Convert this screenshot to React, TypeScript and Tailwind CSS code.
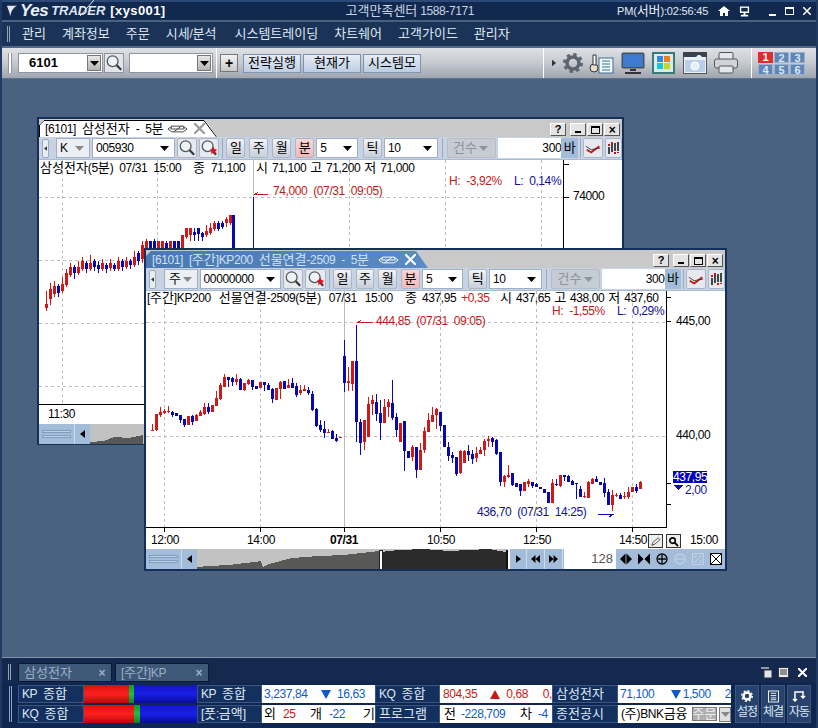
import React from "react";

const K = ({ children }: { children: string }) => (
  <>
    {children.split(/([\uAC00-\uD7A3]+)/).map((s, i) =>
      /[\uAC00-\uD7A3]/.test(s) ? (
        <span key={i} className="text-[13px] tracking-normal">{s}</span>
      ) : (
        <span key={i}>{s}</span>
      )
    )}
  </>
);

const RED = "#d01818";
const BLU = "#0808b0";
type C = [string, number, number, number?, number?];
const r = "r", b = "b";
const z11: C[] = [
  [r,270,272,253,272],[r,222,270,222,272],[r,216,226,202,230],[r,214,218,208,222],[r,212,216,198,220],[b,216,226,214,232],[b,220,228],[b,225,240,225,248],[b,237,255,237,260],[r,228,255],
  [b,228,246,226,254],[r,226,242,222,242],[r,216,228,210,228],[r,202,222,190,224],[b,202,216,190,222],[r,196,216],[r,174,198,154,198],[r,135,178,130,180],[r,110,140,102,140],[b,112,120,110,140],
  [b,114,126,112,138],[r,118,126,102,134],[b,116,150,114,150],[r,130,150,128,154],[r,120,132,116,136],[b,120,140,120,150],[b,138,146],[r,126,144],[b,126,134,126,152],[b,134,150,128,150],
  [b,148,178,144,190],[r,144,180],[r,126,148,124,176],[b,124,146,122,146],[r,135,144,116,144],[b,128,143,114,143],[b,138,164,130,170],[r,150,160,136,164],[r,148,154,136,154],[b,150,160,140,164],
  [b,162,210,154,212],[b,207,258,205,260],[b,256,270,240,276],[b,268,278,242,294],[r,276,278,266,278],[b,272,296,270,296],[b,294,302,282,306],[r,292,294],[b,48,128,0,156],[r,124,128,82,152],
  [r,63,132,63,152],[b,63,246,-45,306],[b,246,308,238,344],[r,240,306,240,330],[r,192,290,170,290],[r,180,192,165,224],[b,186,222,162,242],[b,220,248,180,300],[r,200,248,178,248],[r,186,200,178,230],
  [b,190,234,120,240],[b,232,270,218,290],
];
const z12: C[] = [
  [r,100,155,100,155],[b,92,182,92,242],[b,182,204],[r,172,202,165,214],[b,170,240,170,264],[r,180,240,160,240],[r,122,180,110,190],[r,90,125,68,125],[r,75,96,52,96],[r,58,75,55,118],
  [b,65,108,65,124],[b,105,172],[b,170,198,155,212],[b,194,204,185,218],[b,202,252,202,258],[r,184,248,180,252],[r,182,218,180,218],[b,182,194,165,214],[b,192,207,180,222],[r,188,204,172,216],
  [r,180,192,172,192],[r,152,180,148,198],[r,148,152,138,170],[b,144,155,140,170],[b,150,192,148,195],[b,187,275,187,288],[r,258,276,255,290],[r,254,262,226,264],[b,250,285,250,288],[b,280,290],
  [b,282,302,282,318],[r,275,302],[r,272,282,266,290],[b,277,287,277,295],[b,282,292,280,292],[b,290,298],[b,296,310],[b,305,338],[r,280,340,268,340],[b,282,284,268,288],
  [r,256,287,255,290],[b,256,260,255,272],[b,258,275,255,275],[b,272,284,270,284],[b,280,282,280,326],[b,296,322,288,322],[r,318,321,305,324],[r,275,323,273,323],[r,268,282,264,282],[b,266,276,258,276],
  [b,275,285],[b,280,308,264,322],[b,305,345,298,345],[r,316,345,300,362],[r,314,318,308,322],[b,316,326,308,326],[r,318,322,305,328],[r,305,320,292,326],[r,291,305],[b,292,303,282,308],[r,275,298,272,298],
];

const Candle = ({ x, c, t, bt, wt, wb }: { x: number; c: string; t: number; bt: number; wt: number; wb: number }) => {
  const f = c === "r" ? RED : BLU;
  const px = Math.round(x);
  return (
    <g fill={f} shapeRendering="crispEdges">
      <rect x={px} y={wt} width={1} height={Math.max(1, wb - wt)} />
      <rect x={px - 1} y={t} width={3} height={Math.max(1, bt - t)} />
    </g>
  );
};

const frontCandles = () => {
  const out: React.ReactNode[] = [];
  z11.forEach((d, i) => {
    const [c, t, bo, wt = t, wb = bo] = d;
    out.push(<Candle key={"a" + i} x={145 + (22 + 12 * i) / 3} c={c} t={340 + t / 3} bt={340 + bo / 3} wt={340 + wt / 3} wb={340 + wb / 3} />);
  });
  z12.forEach((d, i) => {
    const [c, t, bo, wt = t, wb = bo] = d;
    out.push(<Candle key={"b" + i} x={400 + (1 + 12 * i) / 3} c={c} t={390 + t / 3} bt={390 + bo / 3} wt={390 + wt / 3} wb={390 + wb / 3} />);
  });
  return out;
};

// x, colour, body top, body bottom, wick top, wick bottom in page pixels
const backData: [number, string, number, number, number, number][] = [
  [46,r,303,307,290,310],[50,r,288,298,282,304],[54,r,285,293,280,296],[58,b,285,292,283,296],[62,r,283,290,276,292],[66,r,272,284,268,286],[70,r,266,274,262,276],[74,b,266,272,264,278],[78,r,266,272,260,274],[82,r,260,268,256,270],
  [86,b,262,268,260,272],[90,r,262,268,254,270],[94,b,260,266,258,270],[98,b,264,268,260,272],[102,r,262,268,258,270],[106,b,264,268,262,272],[110,r,262,267,258,270],[114,b,264,268,262,270],[118,r,260,268,256,270],[122,b,260,266,258,270],
  [126,r,260,266,256,268],[130,b,260,264,258,268],[134,r,256,264,250,266],[138,b,252,260,250,264],[142,r,244,258,240,262],[146,r,240,250,238,252],[150,b,240,248,240,250],[154,b,240,248,238,250],[158,r,240,248,240,250],[162,r,240,248,240,250],
  [166,b,242,248,240,250],[170,r,240,248,240,250],[174,b,240,248,240,250],[178,b,240,248,240,250],[182,r,234,248,234,250],[186,r,227,236,227,238],[190,r,227,234,227,240],[194,b,231,234,227,240],[198,b,227,233,227,240],[202,b,232,236,231,240],
  [206,r,230,234,224,236],[210,r,227,232,222,234],[214,r,222,228,220,230],[218,b,222,228,220,230],[222,b,222,226,220,228],[226,r,218,222,216,226],[230,r,214,222,214,224],[233,b,214,248,214,248],
];

const Mag = ({ red }: { red?: boolean }) => (
  <svg viewBox="0 0 20 20" className="w-[18px] h-[18px]">
    <circle cx="8.500" cy="8" r="6" fill="#eef3fa" stroke="#555" strokeWidth="1.400" />
    <path d="M13 12.500l5 5" stroke="#333" strokeWidth="2.400" />
    {red && <path d="M11 12l3-1 1-3 1 3 3 1-2 2 1 3-3-2-3 2 1-3z" fill="#e01020" />}
  </svg>
);

const Drop = ({ c = "#000" }: { c?: string }) => (
  <svg viewBox="0 0 9 5" className="w-[9px] h-[5px] shrink-0"><path d="M0 0h9L4.500 5z" fill={c} /></svg>
);

const SqBtn = ({ t, on }: { t: string; on?: boolean }) => (
  <div className={`w-[19px] h-[20px] mr-[4px] border border-[#aab6c6] rounded-[2px] flex items-center justify-center ${on ? "bg-gradient-to-b from-[#fbd6d6] to-[#f2b8b8]" : "bg-gradient-to-b from-[#f2f4f7] to-[#c8cfd9]"}`}>
    <K>{t}</K>
  </div>
);

const Combo = ({ t, w, ml }: { t: string; w: string; ml: string }) => (
  <div className={`${w} ${ml} h-[20px] bg-white border border-[#9fb0c6] flex items-center justify-between pl-[3px] pr-[5px]`}>
    <span><K>{t}</K></span><Drop />
  </div>
);

const BarIcon = () => (
  <svg viewBox="0 0 20 20" className="w-[18px] h-[18px]">
    <path d="M3 12l5 3 9-7" fill="none" stroke="#d01010" strokeWidth="2" />
    <path d="M2 8l6 4 4-1 6-1" fill="none" stroke="#333" strokeWidth="1" />
  </svg>
);
const BarIcon2 = () => (
  <svg viewBox="0 0 20 20" className="w-[18px] h-[18px]" shapeRendering="crispEdges">
    <path d="M3 8h2v10H3zM7 5h2v11H7zM11 3h2v11h-2zM15 2h2v12h-2z" fill="#444" />
    <path d="M3 5h2v2H3zM7 2h2v2H7zM11 15h2v3h-2zM15 15h2v2h-2z" fill="#d01010" />
  </svg>
);

const WinBtn = ({ children }: { children: React.ReactNode }) => (
  <div className="w-[16px] h-[13px] bg-[#e4e4e4] border border-[#555] border-t-white border-l-white flex items-center justify-center text-[11px] font-bold text-black leading-none">{children}</div>
);

const Arrows = ({ c }: { c: string }) => (
  <svg viewBox="0 0 22 10" className="w-[21px] h-[10px]" fill="none" stroke={c} strokeWidth="1">
    <path d="M1 5l4-3h12l4 3-4 3H5zM5 2l-1 3h14l-1-3M7 8l8-6" />
  </svg>
);

const Title = ({ active, title, w }: { active?: boolean; title: string; w: string }) => (
  <div className="h-[18px] bg-[#c9c9c9] flex items-end justify-between shrink-0">
    <div className={`${w} h-[17px] relative flex items-center pl-[6px] [clip-path:polygon(0_5px,5px_0,calc(100%-12px)_0,100%_100%,0_100%)] ${active ? "bg-gradient-to-r from-[#4a78b0] to-[#5a8bc4] text-[#cfe1f5]" : "bg-white text-black"}`}>
      <span className="grow whitespace-pre"><K>{title}</K></span>
      <Arrows c={active ? "#ffffff" : "#444444"} />
      <svg viewBox="0 0 10 10" className="ml-[6px] mr-[12px] w-[11px] h-[11px]" stroke={active ? "#ffffff" : "#9a9a9a"} strokeWidth="2"><path d="M0 0l10 10M10 0L0 10" /></svg>
      {!active && (
        <svg viewBox="0 0 178 17" className="absolute inset-0 w-full h-full" fill="none" stroke="#000" preserveAspectRatio="none">
          <path d="M0.500 17V5L5 .5H165L177.500 17" />
        </svg>
      )}
    </div>
    <div className="flex gap-[1px] pr-[2px] pb-[1px]">
      <WinBtn>?</WinBtn><div className="w-[2px]" />
      <WinBtn><span className="w-[6px] h-[2px] bg-black mt-[5px]" /></WinBtn>
      <WinBtn><span className="w-[9px] h-[8px] border border-black border-t-2" /></WinBtn>
      <WinBtn><span className="text-[12px]">×</span></WinBtn>
    </div>
  </div>
);

const Tools = ({ kind, code, kindMl }: { kind: string; code: string; kindMl: string }) => (
  <div className="h-[23px] bg-[#c7d3e3] flex items-center pl-[3px] shrink-0 border-b border-[#a8bbd3] text-[12px]">
    <div className="w-[7px] h-[19px] bg-[#e8edf3] border border-[#9aa9bc] rounded-[2px] flex items-center justify-center shrink-0">
      <svg viewBox="0 0 4 6" className="w-[3px] h-[5px]"><path d="M4 0v6L0 3z" fill="#333" /></svg>
    </div>
    <div className={`${kindMl} w-[34px] h-[20px] bg-[#ecf0f5] border border-[#9fb0c6] flex items-center justify-between pl-[3px] pr-[5px]`}>
      <K>{kind}</K><Drop c="#888" />
    </div>
    <Combo t={code} w="w-[83px]" ml="ml-[2px]" />
    <div className="ml-[2px] w-[20px] h-[20px] bg-[#e6eaf0] border border-[#aab6c6] rounded-[2px] flex items-center justify-center"><Mag /></div>
    <div className="ml-[2px] w-[21px] h-[20px] bg-[#e6eaf0] border border-[#aab6c6] rounded-[2px] flex items-center justify-center"><Mag red /></div>
    <div className="ml-[3px] mr-[3px] w-[1px] h-[20px] bg-[#9aa9bc]" />
    <SqBtn t="일" /><SqBtn t="주" /><SqBtn t="월" /><SqBtn t="분" on />
    <Combo t="5" w="w-[42px]" ml="-ml-[2px]" />
    <div className="ml-[5px] w-[19px] h-[20px] bg-gradient-to-b from-[#f2f4f7] to-[#c8cfd9] border border-[#aab6c6] rounded-[2px] flex items-center justify-center"><K>틱</K></div>
    <Combo t="10" w="w-[54px]" ml="ml-[2px]" />
    <div className="ml-[4px] w-[1px] h-[20px] bg-[#9aa9bc]" />
    <div className="ml-[4px] w-[49px] h-[20px] bg-[#c6ccd4] border border-[#b4bcc7] rounded-[2px] flex items-center justify-between pl-[4px] pr-[6px] text-[#8d949e]">
      <K>건수</K><Drop c="#8d949e" />
    </div>
    <div className="ml-[2px] w-[64px] h-[20px] bg-white flex items-center justify-end">300</div>
    <div className="w-[17px] h-[20px] bg-[#a3bcd9] flex items-center justify-center"><K>바</K></div>
    <div className="ml-[2px] mr-[2px] w-[1px] h-[20px] bg-[#9aa9bc]" />
    <div className="w-[20px] h-[20px] bg-[#e6eaf0] border border-[#aab6c6] rounded-[2px] flex items-center justify-center"><BarIcon /></div>
    <div className="ml-[2px] w-[17px] h-[20px] bg-[#e6eaf0] border border-[#aab6c6] rounded-[2px] flex items-center justify-center overflow-hidden"><BarIcon2 /></div>
  </div>
);

const ScrollGrip = () => (
  <div className="w-[35px] h-full bg-[#a3bcd9] flex flex-col justify-center gap-[2px] px-[3px] shrink-0">
    <div className="h-[3px] bg-[#bcd0e6] border border-[#7f9cbd]" />
    <div className="h-[3px] bg-[#bcd0e6] border border-[#7f9cbd]" />
  </div>
);
const ScrollLeft = () => (
  <div className="w-[16px] h-full bg-[#a3bcd9] border-l border-[#cddcec] flex items-center justify-center shrink-0">
    <svg viewBox="0 0 5 8" className="w-[5px] h-[8px]"><path d="M5 0v8L0 4z" fill="#000" /></svg>
  </div>
);

const Front = () => (
  <div className="absolute left-[142px] top-[169px] w-[583px] h-[323px] border-2 border-[#12305a] bg-white flex flex-col text-[12px] text-black">
    <Title active title="[6101] [주간]KP200 선물연결-2509 - 5분" w="w-[282px]" />
    <Tools kind="주" code="00000000" kindMl="ml-[8px]" />
    <div className="relative h-[237px] shrink-0">
      <svg viewBox="146 291 579 237" className="absolute inset-0 w-[579px] h-[237px]" shapeRendering="crispEdges">
        {[164, 260, 440, 536, 632].map((x) => <line key={x} x1={x + 0.5} x2={x + 0.5} y1={291} y2={527} stroke="#bdbdbd" strokeDasharray="3 3" />)}
        <line x1={344.5} x2={344.5} y1={291} y2={527} stroke="#bcbcbc" />
        {[322, 436].map((y) => <line key={y} x1={146} x2={666} y1={y + 0.5} y2={y + 0.5} stroke="#bdbdbd" strokeDasharray="3 3" />)}
        {frontCandles()}
        <path d="M357 322.500h16" stroke="#c02020" fill="none" />
        <path d="M357 322.500l4-2" stroke="#c02020" fill="none" />
        <path d="M598 514.500h16M609 517l4-2.500" stroke={BLU} fill="none" />
        <line x1={666.5} x2={666.5} y1={291} y2={528} stroke="#000" />
        <line x1={146} x2={667} y1={527.5} y2={527.5} stroke="#000" />
        {[297, 321, 483, 504].map((y) => <line key={y} x1={667} x2={671} y1={y + 0.5} y2={y + 0.5} stroke="#000" />)}
        <path d="M673 485h10l-5 5z" fill="#1010b0" />
      </svg>
      <div className="absolute left-[1px] top-[0px] whitespace-pre [word-spacing:5px]"><K>[주간]KP200 선물연결-2509(5분) 07/31 15:00</K></div>
      <div className="absolute left-[259px] top-[0px] whitespace-pre [word-spacing:2px]"><K>종 437,95 </K><span className="text-[#c81818]">+0,35</span></div>
      <div className="absolute left-[354px] top-[0px] whitespace-pre [word-spacing:1px]"><K>시 437,65 고 438,00 저 437,60</K></div>
      <div className="absolute left-[406px] top-[13px] whitespace-pre text-[#c01818]"><K>H: -1,55%</K></div>
      <div className="absolute left-[471px] top-[13px] whitespace-pre text-[#1010a0]">L: 0,29%</div>
      <div className="absolute left-[230px] top-[23px] whitespace-pre text-[#c01818]">444,85 (07/31 09:05)</div>
      <div className="absolute left-[331px] top-[214px] whitespace-pre text-[#1010a0]">436,70 (07/31 14:25)</div>
      <div className="absolute left-[530px] top-[23px]">445,00</div>
      <div className="absolute left-[530px] top-[137px]">440,00</div>
      <div className="absolute left-[527px] top-[180px] w-[34px] h-[12px] bg-[#0000c0] text-white leading-[12px] text-center">437,95</div>
      <div className="absolute left-[539px] top-[192px] text-[#1010a0]">2,00</div>
    </div>
    <div className="relative h-[21px] shrink-0">
      <span className="absolute top-[5px] left-[5px]">12:00</span>
      <span className="absolute top-[5px] left-[101px]">14:00</span>
      <span className="absolute top-[5px] left-[184px] font-bold">07/31</span>
      <span className="absolute top-[5px] left-[281px]">10:50</span>
      <span className="absolute top-[5px] left-[377px]">12:50</span>
      <span className="absolute top-[5px] left-[473px]">14:50</span>
      <span className="absolute top-[5px] left-[544px]">15:00</span>
      <svg viewBox="146 528 579 21" className="absolute inset-0 w-[579px] h-[21px]" shapeRendering="crispEdges" fill="none" stroke="#000">
        {[164, 260, 344, 440, 536, 632].map((x) => <line key={x} x1={x + 0.5} x2={x + 0.5} y1={528} y2={532} />)}
      </svg>
      <div className="absolute left-[502px] top-[6px] w-[15px] h-[14px] border border-[#333] bg-[#eee] flex items-center justify-center">
        <svg viewBox="0 0 12 12" className="w-[11px] h-[11px]"><path d="M2 10l1-3 6-5 2 2-6 5zM2 10l3-1" fill="none" stroke="#555" /></svg>
      </div>
      <div className="absolute left-[520px] top-[6px] w-[15px] h-[14px] border border-[#333] bg-[#eee] flex items-center justify-center">
        <svg viewBox="0 0 12 12" className="w-[11px] h-[11px]"><circle cx="5" cy="5" r="3" fill="none" stroke="#000" strokeWidth="1.800" /><path d="M7 7l4 4" stroke="#000" strokeWidth="2" /></svg>
      </div>
    </div>
    <div className="h-[20px] flex bg-[#a3bcd9] shrink-0">
      <ScrollGrip /><ScrollLeft />
      <svg viewBox="198 549 313 20" className="w-[313px] h-[20px] shrink-0" shapeRendering="crispEdges">
        <rect x="198" y="549" width="313" height="20" fill="#c2c2c2" />
        <path d="M198 567L210 566 230 565 255 562 262 561 264 567 270 564 293 558 320 556 345 555 380 551V569H198z" fill="#585856" />
        <path d="M381 552L400 550 425 549 450 551 470 550 490 549 507 552V569H381z" fill="#2b2b2b" />
        <rect x="380" y="550" width="3" height="19" fill="#fff" stroke="#222" />
        <rect x="507" y="550" width="2" height="19" fill="#111" />
        <rect x="509" y="549" width="2" height="20" fill="#fff" />
      </svg>
      <div className="w-[17px] border-r border-[#cddcec] flex items-center justify-center"><svg viewBox="0 0 6 9" className="w-[5px] h-[8px]"><path d="M0 0l6 4.500L0 9z" /></svg></div>
      <div className="w-[18px] border-r border-[#cddcec] flex items-center justify-center"><svg viewBox="0 0 10 9" className="w-[9px] h-[8px]"><path d="M5 0v9L0 4.500zM10 0v9L5 4.500z" /></svg></div>
      <div className="w-[18px] border-r border-[#cddcec] flex items-center justify-center"><svg viewBox="0 0 10 9" className="w-[9px] h-[8px]"><path d="M0 0l5 4.500L0 9zM5 0l5 4.500L5 9z" /></svg></div>
      <div className="ml-[1px] w-[52px] bg-white text-right pr-[3px] leading-[20px] text-[#555] text-[13px] tracking-normal">128</div>
      <div className="flex items-center gap-[6px] pl-[4px]">
        <svg viewBox="0 0 13 12" className="w-[12px] h-[12px]"><path d="M6 0v12L0 6zM7 0l6 6-6 6z" /></svg>
        <svg viewBox="0 0 13 12" className="w-[12px] h-[12px]"><path d="M0 0l6 6-6 6zM13 0v12L7 6z" /></svg>
        <svg viewBox="0 0 12 12" className="w-[12px] h-[12px]" fill="none" stroke="#000" strokeWidth="1.300"><circle cx="6" cy="6" r="5" /><path d="M6 2v8M2 6h8" /></svg>
        <svg viewBox="0 0 12 12" className="w-[12px] h-[12px]" fill="none" stroke="#c3d1e2" strokeWidth="1.300"><circle cx="6" cy="6" r="5" /><path d="M2 6h8" /></svg>
        <svg viewBox="0 0 12 12" className="w-[12px] h-[12px]" fill="none" stroke="#c3d1e2"><rect x=".5" y=".5" width="11" height="11" /><path d="M2 10l8-8M3 5V3h2M9 7v2H7" /></svg>
        <svg viewBox="0 0 12 12" className="w-[12px] h-[12px]" fill="#fff" stroke="#000"><rect x=".5" y=".5" width="11" height="11" /><path d="M1 1l10 10M11 1L1 11" /></svg>
      </div>
    </div>
  </div>
);

const Back = () => (
  <div className="absolute left-[35px] top-[38px] w-[587px] h-[328px] border-2 border-[#12305a] bg-white flex flex-col text-[12px] text-black">
    <Title title="[6101] 삼성전자 - 5분" w="w-[178px]" />
    <Tools kind="K" code="005930" kindMl="ml-[7px]" />
    <div className="relative h-[245px] shrink-0">
      <svg viewBox="39 159 583 245" className="absolute inset-0 w-[583px] h-[245px]" shapeRendering="crispEdges">
        {[62, 157, 349, 445, 541].map((x) => <line key={x} x1={x + 0.5} x2={x + 0.5} y1={159} y2={403} stroke="#bdbdbd" strokeDasharray="3 3" />)}
        <line x1={253.5} x2={253.5} y1={159} y2={403} stroke="#bcbcbc" />
        {[196, 259, 322, 385].map((y) => <line key={y} x1={39} x2={563} y1={y + 0.5} y2={y + 0.5} stroke="#bdbdbd" strokeDasharray="3 3" />)}
        {backData.map(([x, c, t, bo, wt, wb], i) => <Candle key={i} x={x} c={c} t={t} bt={bo} wt={wt} wb={wb} />)}
        <line x1={253.5} x2={253.5} y1={196} y2={250} stroke={BLU} />
        <path d="M254 193.500h14M254 193.500l4-2" fill="none" stroke="#c01818" />
        <line x1={563.5} x2={563.5} y1={159} y2={403} stroke="#000" />
        <line x1={39} x2={564} y1={403.500} y2={403.500} stroke="#000" />
        {[163, 196].map((y) => <line key={y} x1={564} x2={569} y1={y + 0.5} y2={y + 0.5} stroke="#000" />)}
      </svg>
      <div className="absolute left-[1px] top-[1px] whitespace-pre"><K>삼성전자(5분) 07/31 15:00</K></div>
      <div className="absolute left-[154px] top-[1px] whitespace-pre"><K>종 71,100</K></div>
      <div className="absolute left-[217px] top-[1px] whitespace-pre [word-spacing:1px]"><K>시 71,100 고 71,200 저 71,000</K></div>
      <div className="absolute left-[410px] top-[14px] whitespace-pre text-[#c01818]">H: -3,92%</div>
      <div className="absolute left-[475px] top-[14px] whitespace-pre text-[#1010a0]">L: 0,14%</div>
      <div className="absolute left-[234px] top-[24px] whitespace-pre text-[#c01818]">74,000 (07/31 09:05)</div>
      <div className="absolute left-[534px] top-[29px]">74000</div>
    </div>
    <div className="relative h-[19px] shrink-0"><span className="absolute left-[9px] top-[2px]">11:30</span></div>
    <div className="h-[20px] flex bg-[#a3bcd9] shrink-0">
      <ScrollGrip /><ScrollLeft />
      <svg viewBox="91 423 60 20" className="w-[60px] h-[20px] shrink-0" shapeRendering="crispEdges">
        <rect x="91" y="423" width="60" height="20" fill="#c2c2c2" />
        <path d="M91 441L105 440 115 436 130 437 144 434V443H91z" fill="#585856" />
      </svg>
    </div>
  </div>
);

const Cell = ({ w, children }: { w: string; children: string }) => (
  <div className={`${w} h-full bg-[#13305f] border border-[#3d5680] flex items-center pl-[3px] text-[#dfe8f4] shrink-0`}><span className="whitespace-pre"><K>{children}</K></span></div>
);
const Val = ({ w, children }: { w: string; children: React.ReactNode }) => (
  <div className={`${w} h-full bg-white flex items-center overflow-hidden whitespace-pre shrink-0 text-black`}>{children}</div>
);
const Bar = ({ a, g }: { a: string; g: string }) => (
  <div className="w-[113px] h-full flex shrink-0 bg-gradient-to-b from-[#1414c8] via-[#1820e8] to-[#0a0a98]">
    <div className={`${a} h-full bg-gradient-to-b from-[#d81010] via-[#ff2020] to-[#b80808]`} />
    <div className={`${g} h-full bg-gradient-to-b from-[#109a30] via-[#20c040] to-[#108028]`} />
  </div>
);
const Tri = ({ up, c }: { up?: boolean; c: string }) => (
  <svg viewBox="0 0 10 9" className="w-[10px] h-[9px] shrink-0"><path d={up ? "M5 0l5 9H0z" : "M0 0h10L5 9z"} fill={c} /></svg>
);
const SideBtn = ({ icon, t }: { icon: React.ReactNode; t: string }) => (
  <div className="w-[24px] h-[38px] bg-[#27426d] border border-[#3d5680] flex flex-col items-center justify-between pt-[4px] pb-[3px] text-[#dfe8f4] mr-[2px] shrink-0">
    {icon}<span className="leading-[14px] -tracking-[1px]">{t}</span>
  </div>
);

export default function App() {
  return (
    <div className="relative w-[818px] h-[728px] overflow-hidden bg-[#12294f] flex flex-col border-x-2 border-[#1f3a63] text-[12px] leading-[14px] tracking-[-0.4px] [word-spacing:3px] [font-family:'Liberation_Sans','Noto_Sans_CJK_KR',sans-serif] text-black">
      {/* title bar */}
      <div className="h-[22px] shrink-0 flex items-center bg-[#12294f] border-t-2 border-[#2b4a78] border-b-2 border-b-[#48617f] text-[#dde6f2] relative">
        <svg viewBox="0 0 14 14" className="w-[12px] h-[14px] ml-[4px]"><path d="M1 1c4 0 9 0 12 0C8 3 6 8 5 13 4 8 2 4 1 1z" fill="#dfe8f4" /></svg>
        <span className="ml-[2px] italic font-bold text-[17px] tracking-[-0.5px] text-[#eaf0f8]">Yes</span>
        <span className="relative ml-[3px] italic font-bold text-[13px] tracking-[0px] text-[#dfe7f2]">
          TRADER
          <svg viewBox="0 0 14 16" className="absolute left-[29px] -top-[4px] w-[14px] h-[16px]"><path d="M0 16L14 0" stroke="#dfe7f2" strokeWidth="1" /></svg>
        </span>
        <span className="ml-[5px] font-bold text-[13px] tracking-[0.4px] text-white">[xys001]</span>
        <span className="ml-[180px] text-[#c8d4e4] [word-spacing:0px]"><K>고객만족센터 1588-7171</K></span>
        <span className="ml-[143px] tracking-[-0.2px] text-[11px] text-[#e2e9f3]"><K>PM(서버):02:56:45</K></span>
        <svg viewBox="0 0 12 10" className="ml-[10px] w-[12px] h-[10px]"><path d="M6 0l6 5h-2v5H7V7H5v3H2V5H0z" fill="#fff" /></svg>
        <svg viewBox="0 0 12 11" className="ml-[9px] w-[11px] h-[11px]" fill="#fff"><path d="M1 0h10v7H1zM5 7h2v2h3v2H2V9h3z" /><rect x="2.500" y="1.500" width="7" height="4" fill="#12294f" /></svg>
        <span className="ml-[19px] w-[7px] h-[2px] bg-white mt-[7px]" />
        <span className="ml-[9px] w-[9px] h-[8px] border border-white border-t-2" />
        <svg viewBox="0 0 8 8" className="ml-[9px] w-[8px] h-[8px]" stroke="#fff" strokeWidth="1.500"><path d="M0 0l8 8M8 0L0 8" /></svg>
      </div>
      {/* menu */}
      <div className="h-[26px] shrink-0 flex items-center bg-[#1c3358] border-b-2 border-[#52688a] text-[#dfe7f2]">
        <div className="ml-[5px] w-[3px] h-[16px] border-x border-[#8fa2bc]" />
        <div className="ml-[12px] flex gap-[16px]">
          <span><K>관리</K></span>
          <span><K>계좌정보</K></span>
          <span><K>주문</K></span>
          <span className="pr-[2px]"><K>시세/분석</K></span>
          <span><K>시스템트레이딩</K></span>
          <span><K>차트쉐어</K></span>
          <span><K>고객가이드</K></span>
          <span><K>관리자</K></span>
        </div>
      </div>
      {/* toolbar */}
      <div className="h-[30px] shrink-0 flex items-center bg-gradient-to-b from-[#dfe1e5] via-[#c6c9cf] to-[#9fa5af]">
        <div className="ml-[6px] w-[4px] h-[20px] border-x border-[#8e95a0] bg-white" />
        <div className="ml-[6px] w-[85px] h-[20px] bg-white border border-[#8e95a0] flex items-center justify-between pl-[10px] pr-[1px] font-bold text-[13px] tracking-normal">
          6101
          <span className="w-[14px] h-[16px] bg-gradient-to-b from-[#e8e8e8] to-[#b4b4b4] border border-[#777] flex items-center justify-center"><Drop /></span>
        </div>
        <div className="ml-[1px] w-[20px] h-[20px] bg-[#e2e5ea] border border-[#8e95a0] flex items-center justify-center"><Mag /></div>
        <div className="ml-[5px] w-[84px] h-[20px] bg-white border border-[#8e95a0] flex items-center justify-end pr-[1px]">
          <span className="w-[14px] h-[16px] bg-gradient-to-b from-[#e8e8e8] to-[#b4b4b4] border border-[#777] flex items-center justify-center"><Drop /></span>
        </div>
        <div className="ml-[3px] w-[1px] h-[30px] bg-white" />
        <div className="ml-[3px] w-[18px] h-[18px] bg-gradient-to-b from-[#f4f4f4] to-[#c8c8c8] border border-[#777] flex items-center justify-center font-bold text-[14px]">+</div>
        <div className="ml-[5px] w-[58px] h-[19px] bg-gradient-to-b from-[#e6edf6] to-[#bccde2] border border-[#7d93b1] flex items-center justify-center"><K>전략실행</K></div>
        <div className="ml-[2px] w-[58px] h-[19px] bg-gradient-to-b from-[#e6edf6] to-[#bccde2] border border-[#7d93b1] flex items-center justify-center"><K>현재가</K></div>
        <div className="ml-[2px] w-[58px] h-[19px] bg-gradient-to-b from-[#e6edf6] to-[#bccde2] border border-[#7d93b1] flex items-center justify-center"><K>시스템모</K></div>
        <div className="ml-[122px] w-[1px] h-[30px] bg-white" />
        <svg viewBox="0 0 5 8" className="ml-[8px] w-[4px] h-[8px]"><path d="M0 0l5 4-5 4z" fill="#333" /></svg>
        <svg viewBox="0 0 20 20" className="ml-[7px] w-[20px] h-[20px]"><circle cx="10" cy="10" r="6" fill="none" stroke="#5c6470" strokeWidth="3.500" /><circle cx="10" cy="10" r="8.500" fill="none" stroke="#5c6470" strokeWidth="3" strokeDasharray="3.340 3.340" /></svg>
        <svg viewBox="0 0 25 21" className="ml-[6px] w-[25px] h-[21px]"><circle cx="5" cy="15" r="4" fill="#e8e0c8" stroke="#333" /><path d="M4 2h3v10H4z" fill="#fff" stroke="#333" /><rect x="10" y="5" width="14" height="15" fill="#f4f8fc" stroke="#3a6a90" /><path d="M13 8h8M13 11h8M13 14h8M13 17h8" stroke="#2a7a90" /></svg>
        <svg viewBox="0 0 24 22" className="ml-[7px] w-[24px] h-[22px]"><rect x=".5" y=".5" width="23" height="16" rx="1.500" fill="#4a5058" /><rect x="2" y="2" width="20" height="13" fill="#3c7bd0" /><path d="M9 17h6v2H9zM4 20h16v2H4z" fill="#333" /></svg>
        <svg viewBox="0 0 23 22" className="ml-[7px] w-[23px] h-[22px]" shapeRendering="crispEdges"><rect width="23" height="22" fill="#3a7a78" /><rect x="2" y="2" width="19" height="18" fill="#d8ecec" /><rect x="5" y="4" width="6" height="6" fill="#3a8ad0" /><rect x="12" y="4" width="6" height="6" fill="#e88020" /><rect x="5" y="11" width="6" height="6" fill="#18c8d0" /><rect x="12" y="11" width="6" height="6" fill="#c8d820" /></svg>
        <svg viewBox="0 0 24 22" className="ml-[8px] w-[24px] h-[22px]"><rect x=".5" y=".5" width="23" height="21" fill="#eaf0f8" stroke="#555" /><path d="M0 0h24v5H19l-2-2h-2l-2 2H0z" fill="#3a4250" /><rect x="2" y="8" width="20" height="12" fill="#b9cfe8" /><circle cx="12" cy="14" r="4" fill="#e8eef6" stroke="#fff" /></svg>
        <svg viewBox="0 0 24 22" className="ml-[7px] w-[24px] h-[22px]" stroke="#555" fill="#e4e7ec"><rect x="5" y=".5" width="14" height="7" rx="1" /><rect x=".5" y="7" width="23" height="9" rx="2" fill="#cfd3da" /><rect x="5" y="14" width="14" height="7" rx="1" /></svg>
        <div className="ml-[13px] w-[1px] h-[30px] bg-white" />
        <div className="ml-[6px] grid grid-cols-3 gap-x-[1px] gap-y-[1px] text-center font-bold text-[11px] leading-[10px] tracking-normal">
          <span className="w-[15px] h-[11px] bg-[#d83030] text-white">1</span>
          <span className="w-[15px] h-[11px] bg-[#5f86b6] border border-[#9ab2cf] text-[#dbe6f2]">2</span>
          <span className="w-[15px] h-[11px] bg-[#5f86b6] border border-[#9ab2cf] text-[#dbe6f2]">3</span>
          <span className="w-[15px] h-[11px] bg-[#5f86b6] border border-[#9ab2cf] text-[#dbe6f2]">4</span>
          <span className="w-[15px] h-[11px] bg-[#5f86b6] border border-[#9ab2cf] text-[#dbe6f2]">5</span>
          <span className="w-[15px] h-[11px] bg-[#5f86b6] border border-[#9ab2cf] text-[#dbe6f2]">6</span>
        </div>
      </div>
      {/* workspace */}
      <div className="grow relative bg-[#4a6280] border-t border-[#5b7290]">
        <Back />
        <Front />
      </div>
      {/* tabs */}
      <div className="h-[26px] shrink-0 bg-[#14294d] border-t border-[#7e93ad] flex items-end pb-[1px] text-[#9fb0c6]">
        <div className="ml-[6px] mb-[2px] w-[3px] h-[16px] border-x border-[#8fa2bc]" />
        <div className="ml-[7px] w-[94px] h-[19px] bg-[#3e5877] border border-[#0a1a34] flex items-center justify-between pl-[5px] pr-[6px]"><span><K>삼성전자</K></span><span className="font-bold">×</span></div>
        <div className="ml-[3px] w-[94px] h-[19px] bg-[#3e5877] border border-[#0a1a34] flex items-center justify-between pl-[5px] pr-[6px]"><span><K>[주간]KP</K></span><span className="font-bold">×</span></div>
        <div className="ml-[552px] mb-[4px] flex items-center gap-[6px]">
          <svg viewBox="0 0 11 11" className="w-[11px] h-[11px]"><rect x="3" y="3" width="8" height="8" fill="#dfe6ef" stroke="#333" /><path d="M0 0h8v2H0z" fill="#8b98aa" /></svg>
          <svg viewBox="0 0 11 11" className="w-[11px] h-[11px]"><rect x=".5" y=".5" width="10" height="10" fill="#e8edf3" stroke="#333" /><path d="M2 3h7M2 5h7M2 7h7" stroke="#333" /></svg>
          <svg viewBox="0 0 9 9" className="w-[9px] h-[9px] ml-[3px]" stroke="#fff" strokeWidth="2"><path d="M0 0l9 9M9 0L0 9" /></svg>
        </div>
      </div>
      {/* status rows */}
      <div className="h-[45px] shrink-0 bg-[#0f2650] flex items-start pt-[2px] text-[12px]">
        <div className="ml-[7px] mt-[1px] w-[3px] h-[36px] border-x border-[#8fa2bc]" />
        <div className="ml-[6px] flex flex-col gap-[2px] w-[714px]">
          <div className="h-[18px] flex">
            <Cell w="w-[66px]">KP 종합</Cell>
            <Bar a="w-[45px]" g="w-[5px]" />
            <Cell w="w-[65px]">KP 종합</Cell>
            <Val w="w-[113px]"><span className="ml-[2px] w-[54px] text-[#1058d0]">3,237,84</span><span className="ml-[3px]"><Tri c="#1058d0" /></span><span className="ml-[6px] text-[#1058d0]">16,63</span></Val>
            <Cell w="w-[65px]">KQ 종합</Cell>
            <Val w="w-[112px]"><span className="ml-[3px] w-[44px] text-[#c81818]">804,35</span><span className="ml-[4px]"><Tri up c="#c81818" /></span><span className="ml-[6px] text-[#c81818] w-[37px]">0,68</span><span className="text-[#c81818]">0,</span></Val>
            <Cell w="w-[66px]">삼성전자</Cell>
            <Val w="w-[113px]"><span className="ml-[2px] w-[53px] text-[#1058d0]">71,100</span><Tri c="#1058d0" /><span className="ml-[1px] pl-[1px] text-[#1058d0] w-[45px]">1,500</span><span className="text-[#1058d0]">2</span></Val>
          </div>
          <div className="h-[18px] flex">
            <Cell w="w-[66px]">KQ 종합</Cell>
            <Bar a="w-[50px]" g="w-[6px]" />
            <Cell w="w-[65px]">[풋:금액]</Cell>
            <Val w="w-[113px]"><span className="ml-[2px] w-[19px]"><K>외</K></span><span className="w-[27px] text-[#c81818]">25</span><span className="w-[19px]"><K>개</K></span><span className="w-[34px] text-[#1058d0]">-22</span><span><K>기</K></span></Val>
            <Cell w="w-[65px]">프로그램</Cell>
            <Val w="w-[112px]"><span className="ml-[4px] w-[17px]"><K>전</K></span><span className="w-[59px] text-[#1058d0]">-228,709</span><span className="w-[18px]"><K>차</K></span><span className="text-[#1058d0]">-4</span></Val>
            <Cell w="w-[66px]">종전공시</Cell>
            <Val w="w-[113px]"><span className="ml-[3px] w-[71px]"><K>(주)BNK금융</K></span><span className="w-[25px] h-[14px] bg-[#b0b0b0] border border-[#777] text-[#eee] flex items-center justify-center"><K>주문</K></span><span className="ml-[2px] w-[12px] h-[15px] border border-[#777] bg-[#e0e0e0] flex items-center justify-center"><Drop c="#888" /></span></Val>
          </div>
        </div>
        <div className="ml-[3px] flex">
          <SideBtn t="설정" icon={<svg viewBox="0 0 12 12" className="w-[12px] h-[12px]"><circle cx="6" cy="6" r="3.500" fill="none" stroke="#fff" strokeWidth="2.500" /><circle cx="6" cy="6" r="5.200" fill="none" stroke="#fff" strokeWidth="1.500" strokeDasharray="2 2.080" /></svg>} />
          <SideBtn t="체결" icon={<svg viewBox="0 0 12 13" className="w-[11px] h-[13px]" fill="none" stroke="#fff"><rect x=".5" y=".5" width="11" height="12" /><path d="M3 3h6M3 5.500h6M3 8h6M3 10h6" /></svg>} />
          <SideBtn t="자동" icon={<svg viewBox="0 0 14 12" className="w-[14px] h-[12px]" fill="none" stroke="#fff" strokeWidth="1.500"><path d="M3 11V2h8M11 1v7M1 9l2 2 2-2M9 6l2 2 2-2" /></svg>} />
        </div>
      </div>
    </div>
  );
}
